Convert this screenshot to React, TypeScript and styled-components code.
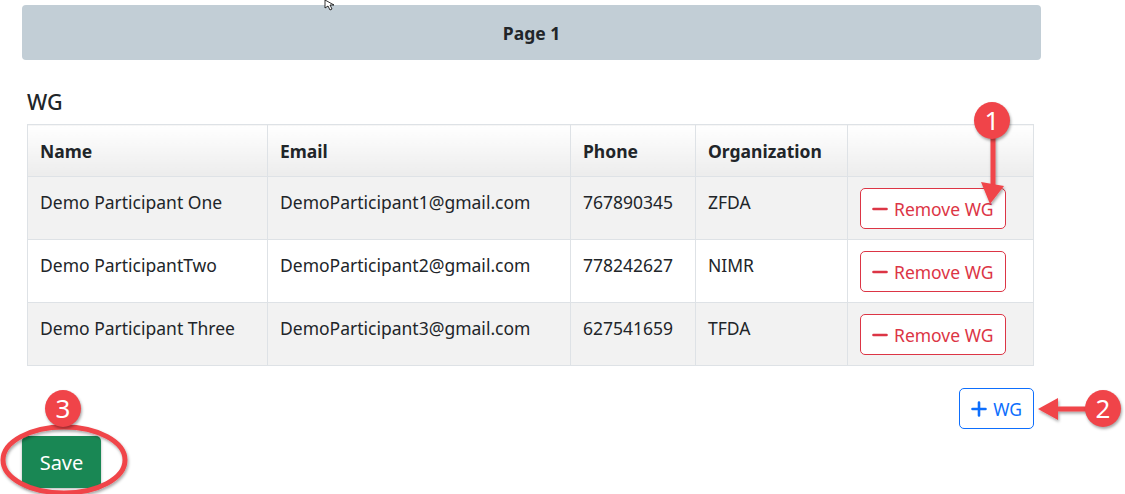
import styled, { createGlobalStyle } from 'styled-components'

const Global = createGlobalStyle`
  html, body {
    margin: 0;
    padding: 0;
    background: #fff;
    overflow: hidden;
  }
  body {
    font-family: "Noto Sans", "Open Sans", sans-serif;
    color: #212529;
  }
`

const rows = [
  { name: 'Demo Participant One', email: 'DemoParticipant1@gmail.com', phone: '767890345', org: 'ZFDA' },
  { name: 'Demo ParticipantTwo', email: 'DemoParticipant2@gmail.com', phone: '778242627', org: 'NIMR' },
  { name: 'Demo Participant Three', email: 'DemoParticipant3@gmail.com', phone: '627541659', org: 'TFDA' },
]

function App() {
  return (
    <Page>
      <Global />
      <PageBar>Page 1</PageBar>
      <Section>
        <Heading>WG</Heading>
        <Table>
          <colgroup>
            <col style={{ width: 240 }} />
            <col style={{ width: 303 }} />
            <col style={{ width: 125 }} />
            <col style={{ width: 152 }} />
            <col />
          </colgroup>
          <thead>
            <tr>
              <Th>Name</Th>
              <Th>Email</Th>
              <Th>Phone</Th>
              <Th>Organization</Th>
              <Th></Th>
            </tr>
          </thead>
          <tbody>
            {rows.map((r, i) => (
              <Tr key={r.email} $striped={i % 2 === 0}>
                <Td>{r.name}</Td>
                <Td>{r.email}</Td>
                <Td>{r.phone}</Td>
                <Td>{r.org}</Td>
                <Td>
                  <OutlineBtn $color="#dc3545">
                    <svg width="16" height="16" viewBox="0 0 16 16">
                      <path d="M1.5 8h13" stroke="currentColor" strokeWidth="2.6" strokeLinecap="round" />
                    </svg>
                    Remove WG
                  </OutlineBtn>
                </Td>
              </Tr>
            ))}
          </tbody>
        </Table>
        <AddRow>
          <OutlineBtn $color="#0d6efd">
            <svg width="16" height="16" viewBox="0 0 16 16">
              <path d="M8 1.5v13M1.5 8h13" stroke="currentColor" strokeWidth="2.6" strokeLinecap="round" />
            </svg>
            WG
          </OutlineBtn>
        </AddRow>
      </Section>
      <SaveBtn>Save</SaveBtn>

      {/* screenshot annotations */}
      <Marks width="1125" height="494" viewBox="0 0 1125 494">
        <defs>
          <filter id="sh" x="-20%" y="-20%" width="140%" height="140%">
            <feDropShadow dx="1" dy="2" stdDeviation="1.5" floodColor="#000" floodOpacity="0.35" />
          </filter>
        </defs>
        <g filter="url(#sh)" fill="#f04449" stroke="#f04449">
          <line x1="993" y1="132" x2="993" y2="186" strokeWidth="5" />
          <polygon points="981,182 1004,186 990,204" stroke="none" />
          <line x1="1092" y1="409" x2="1054" y2="409" strokeWidth="5" />
          <polygon points="1038,409 1058,398 1058,420" stroke="none" />
          <ellipse cx="64" cy="460" rx="61" ry="33" fill="none" strokeWidth="5" />
        </g>
        <path d="M325 0 L325 8 L328 6 L330 10 L332 9 L330 5 L334 5 Z" fill="#fff" stroke="#000" strokeWidth="0.8" />
      </Marks>
      <Badge $x={974} $y={102}>1</Badge>
      <Badge $x={1085} $y={390}>2</Badge>
      <Badge $x={45} $y={390}>3</Badge>
    </Page>
  )
}

export default App

const Page = styled.div`
  position: relative;
  width: 1125px;
  height: 494px;
  padding: 5px 0 0 22px;
  box-sizing: border-box;
`

const PageBar = styled.div`
  width: 1019px;
  height: 55px;
  background-color: #c2ced6;
  border-radius: 4px;
  display: flex;
  align-items: center;
  justify-content: center;
  font-weight: 700;
  font-size: 17.5px;
  color: #212529;
`

const Section = styled.div`
  width: 1007px;
  margin-left: 5px;
  padding-top: 27px;
`

const Heading = styled.h5`
  margin: 0 0 8px 0;
  font-size: 21.5px;
  font-weight: 500;
  line-height: 29px;
`

const Table = styled.table`
  width: 100%;
  border-collapse: collapse;
  font-size: 17.5px;
  table-layout: fixed;
  border: 1px solid #dee2e6;
`

const Th = styled.th`
  height: 51px;
  text-align: left;
  padding: 0 12px;
  font-weight: 700;
  border: 1px solid #dee2e6;
  background: linear-gradient(#ffffff, #ececec);
`

const Tr = styled.tr<{ $striped: boolean }>`
  background: ${p => (p.$striped ? '#f2f2f2' : '#ffffff')};
`

const Td = styled.td`
  height: 62px;
  box-sizing: border-box;
  padding: 12px 12px 10px 12px;
  vertical-align: top;
  line-height: 26px;
  white-space: nowrap;
  border: 1px solid #dee2e6;
`

const OutlineBtn = styled.button`
  display: inline-flex;
  align-items: center;
  gap: 6px;
  height: 41px;
  margin-top: -1px;
  padding: 0 11px;
  background: #fff;
  color: ${(p: { $color: string }) => p.$color};
  border: 1px solid ${(p: { $color: string }) => p.$color};
  border-radius: 5px;
  font-family: inherit;
  font-size: 17.5px;
  white-space: nowrap;
`

const AddRow = styled.div`
  display: flex;
  justify-content: flex-end;
  margin-top: 23px;
`

const SaveBtn = styled.button`
  display: block;
  margin-top: 7px;
  width: 79px;
  height: 52px;
  background: #198754;
  color: #fff;
  border: none;
  border-radius: 5px;
  font-family: inherit;
  font-size: 20px;
  box-shadow: 0 1px 3px rgba(0, 0, 0, 0.3);
`

const Marks = styled.svg`
  position: absolute;
  left: 0;
  top: 0;
  pointer-events: none;
`

const Badge = styled.div<{ $x: number; $y: number }>`
  position: absolute;
  left: ${p => p.$x}px;
  top: ${p => p.$y}px;
  width: 36px;
  height: 37px;
  border-radius: 50%;
  background: #f04449;
  color: #fff;
  font-size: 26px;
  line-height: 37px;
  text-align: center;
  box-shadow: 1px 2px 3px rgba(0, 0, 0, 0.35);
`
